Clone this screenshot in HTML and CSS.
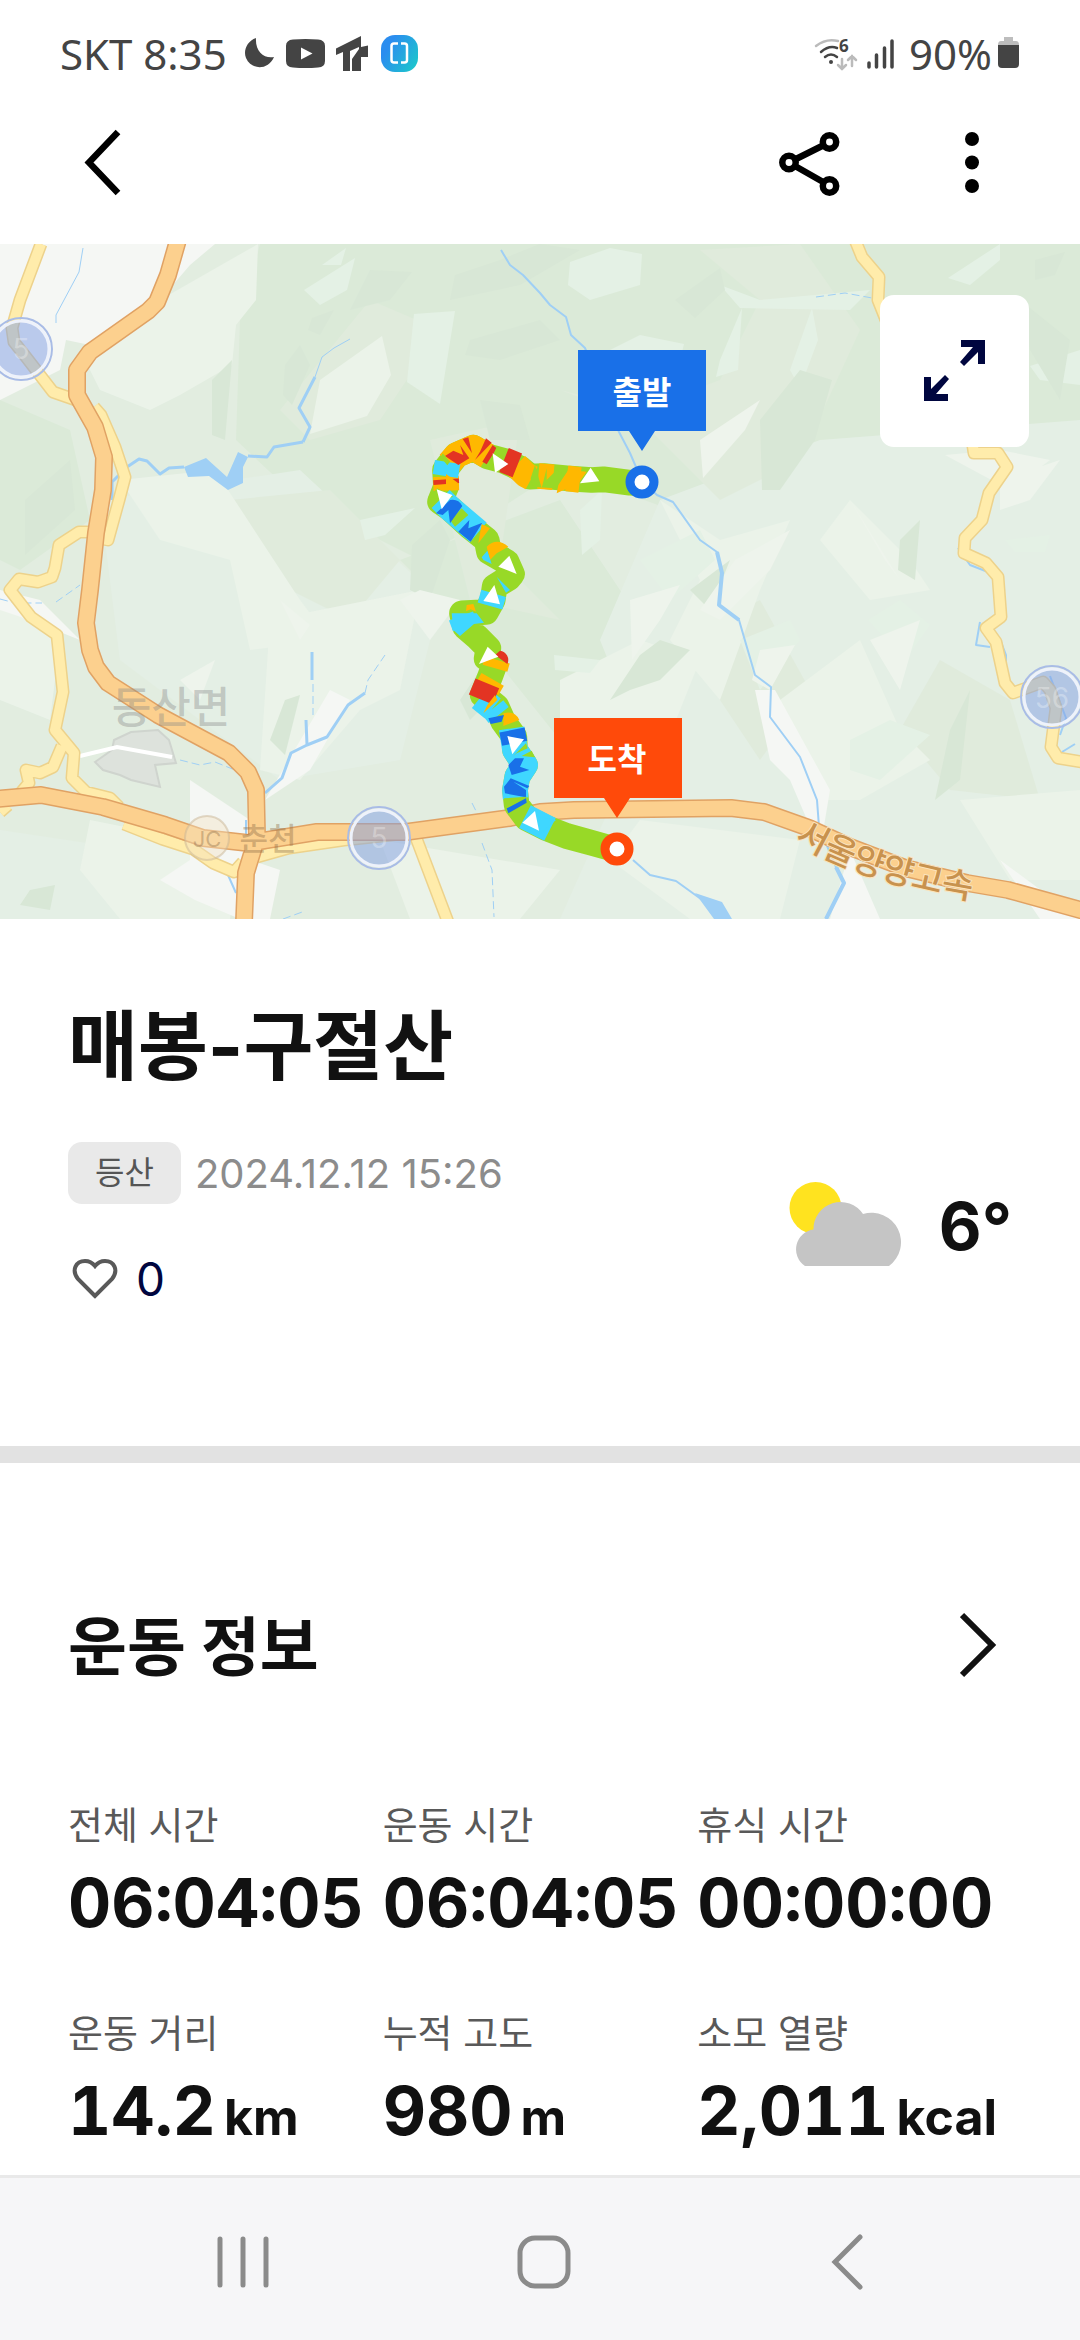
FILE: index.html
```html
<!DOCTYPE html>
<html lang="ko">
<head>
<meta charset="UTF-8" />
<meta name="viewport" content="width=device-width, initial-scale=1.0" />
<title>매봉-구절산</title>
<link rel="stylesheet" href="styles.css">
</head>
<body>

<div class="status-bar">
  <div class="status-left">
    <span>SKT 8:35</span>
    <svg class="status-icons" width="174" height="38" viewBox="243 34 174 38">
      <path d="M255 38C246 41 242 51 245 58C250 70 267 71 273 57C263 59 254 51 255 38Z" fill="#444"/>
      <path d="M292 39.500Q304.500 38.500 317 39.500Q324 40 324 46V61Q324 67 317 67.500Q304.500 68.500 292 67.500Q285 67 285 61V46Q285 40 292 39.500Z" fill="#444"/>
      <path d="M300 47.500L311.500 53.500L300 59.500Z" fill="#fff"/>
      <path d="M335 48.500L360 36V47L367 45.500V57H360V71H351V59L358 49V47L349 51V71H342V52L335 55Z" fill="#444"/>
      <defs>
        <linearGradient id="appGrad" x1="0" y1="0.200" x2="1" y2="0.800">
          <stop offset="0.200" stop-color="#2b8def"/>
          <stop offset="1" stop-color="#1cc6cc"/>
        </linearGradient>
      </defs>
      <rect x="380" y="35" width="37" height="37" rx="14" fill="url(#appGrad)"/>
      <path d="M397 43.500H393Q390.500 43.500 390.500 46V60Q390.500 62.500 393 62.500H397M400 43.500H403.500Q406 43.500 406 46V60Q406 62.500 403.500 62.500H400" fill="none" stroke="#fff" stroke-width="2.500"/>
    </svg>
  </div>
  <div class="status-right">
    <svg width="82" height="44" viewBox="810 30 82 44">
      <g fill="none" stroke="#444" stroke-width="2.500" stroke-linecap="round">
        <path d="M813 45Q823 37 835 40" stroke="#bbb"/>
        <path d="M818 51Q826 44 834 47M822 56Q828 51 834 56"/>
        <path d="M839 58V68M835 64L839 68L843 64M849 65V55M845 59L849 55L853 59" stroke="#bbb"/>
      </g>
      <circle cx="828" cy="61" r="2" fill="#444"/>
      <text x="836" y="51" class="wifi-gen">6</text>
      <path d="M866 62V66M873.500 54V66M881.500 47V66M889 40V66" stroke="#444" stroke-width="3.500" stroke-linecap="round"/>
    </svg>
    <span>90%</span>
    <svg width="22" height="32" viewBox="998 37 22 32">
      <path d="M1004 37H1013V41H1016Q1019 41 1019 45V50H998V45Q998 41 1001 41H1004Z" fill="#bdbdbd"/>
      <path d="M998 45H1019V64Q1019 68 1015 68H1002Q998 68 998 64Z" fill="#444"/>
    </svg>
  </div>
</div>

<header class="app-bar">
  <button class="icon-button" aria-label="뒤로">
    <svg width="60" height="80" viewBox="72 122 60 80"><path d="M118 132L89 162.500L118 193" fill="none" stroke="#000" stroke-width="6.500"/></svg>
  </button>
  <div class="app-bar-actions">
    <button class="icon-button" aria-label="공유">
      <svg width="80" height="80" viewBox="767 122 80 80">
        <g fill="none" stroke="#000" stroke-width="6.500">
          <path d="M794 159.500L823 145M794 166L823 182.500"/>
          <circle cx="788" cy="162.500" r="6.700"/>
          <circle cx="828.500" cy="142" r="6.700"/>
          <circle cx="828.500" cy="186" r="6.700"/>
        </g>
      </svg>
    </button>
    <button class="icon-button" aria-label="더보기">
      <svg width="80" height="80" viewBox="931 122 80 80"><circle cx="971" cy="139" r="7"/><circle cx="971" cy="162.500" r="7"/><circle cx="971" cy="186" r="7"/></svg>
    </button>
  </div>
</header>

<main>
  <section class="map">
    <svg class="map-canvas" viewBox="0 244 1080 675">
      <!-- terrain -->
      <rect y="244" width="1080" height="675" fill="#e2ede0"/>
      <path fill="#dbead8" d="M260 244H1080V420L940 480L820 470L700 520L560 470L420 560L300 500L236 440L240 320ZM400 560L560 500L640 620L560 740L480 640ZM0 400L70 430L90 520L20 570L0 560Z"/>
      <path fill="#e4efe5" d="M660 500L820 440L1080 420V919H560L640 740L600 640ZM100 500L300 470L440 600L400 760L280 780L120 660ZM0 830L200 860L160 919H0Z"/>
      <path fill="#e0ebdc" d="M370 300L440 330L380 420L310 440L280 410ZM560 390L640 410L720 380L760 300L700 250L800 244L860 330L800 460L720 500L640 420ZM430 440L520 420L500 560L560 620L470 600ZM230 500L330 490L400 560L350 620L250 570ZM680 640L760 600L810 690L760 760ZM940 660L1010 700L1040 800L950 790L900 730Z"/>
      <path fill="#ebf3e9" d="M160 300L258 244L256 300L236 325L232 365L180 395L150 410L100 390L85 360ZM320 380L382 336L391 375L367 416L310 434ZM120 480L215 470L300 600L330 640L250 650L230 560L160 540ZM660 500L720 540L790 520L760 590L720 700L670 640L700 580ZM850 500L910 560L930 590L870 600L820 540ZM270 620L420 590L400 690L360 710L300 780L260 770ZM560 680L640 640L700 660L660 760L560 730ZM780 700L860 640L900 730L930 760L860 800L820 800ZM640 820L800 840L780 919H690L610 860ZM380 840L560 870L520 919H410ZM90 820L240 850L230 919H120L80 870ZM960 800L1080 790V880L1010 880ZM0 590L60 640L50 720L0 700Z"/>
      <path fill="#e4f1e5" d="M570 262L610 248L642 254L640 285L590 300L568 285ZM414 314L455 311L440 404L407 382ZM304 290L355 258L347 290L320 305ZM322 265L346 248L341 265ZM720 360L742 308L738 370L716 377ZM790 370L812 308L818 340L800 388ZM640 335L684 344L680 360L600 355ZM580 510L602 490L600 540L582 555ZM360 520L415 508L385 535L365 540ZM948 278L1000 244L1000 260L970 285ZM1030 366L1080 350V385L1040 380ZM1005 540L1050 535L1045 552L1015 552ZM554 655L600 660L590 673L555 670ZM740 640L790 620L800 640L760 690ZM868 620L900 600L930 625L905 660ZM850 740L890 720L930 735L880 780L850 770ZM640 560L700 530L715 560L670 600ZM720 285L760 300L870 290L850 310L740 308Z"/>
      <path fill="#d8e7d6" d="M455 275L500 260L540 244L580 250L520 285L450 300ZM470 340L540 320L560 340L500 360L465 355ZM675 300L720 268L725 290L695 318ZM760 420L800 370L832 380L815 440L780 490L762 490ZM212 380L232 360L225 440L212 435ZM370 270L412 272L390 300L350 310ZM312 318L334 310L320 335L308 330ZM285 365L300 345L310 365L292 405L283 395ZM880 340L920 300L915 345L885 350ZM1035 260L1065 252L1055 275L1035 280ZM25 500L70 460L75 510L25 555ZM412 545L440 520L450 540L430 600L410 590ZM610 700L640 655L660 640L690 650L660 680L630 690ZM900 540L920 520L915 580L898 570ZM935 800L950 730L970 690L960 780ZM270 740L285 700L300 695L285 755ZM480 670L500 690L470 720L460 700ZM1020 300L1070 340L1060 400L1030 350ZM30 890L55 885L50 910L20 905ZM690 590L730 560L710 610ZM480 400L520 405L530 440L490 440Z"/>
      <path fill="#eef4ec" d="M735 560L790 530L770 570L720 620L700 610ZM870 640L920 620L900 690ZM1000 480L1060 460L1030 500L1000 510ZM460 600L430 640L400 600L420 590ZM280 600L310 625L300 640ZM180 680L215 660L200 700ZM630 600L680 585L660 620L632 660ZM945 455L1000 450L1050 460L1010 490ZM760 650L795 645L770 690L752 680ZM850 500L900 580L885 560ZM30 600L60 625L55 640L10 610ZM700 440L760 400L745 430L703 478Z"/>
      <path fill="#f5f7f4" d="M0 244H215L190 265L160 300L90 345L66 340L60 370L0 400ZM190 780L250 820L240 919L195 900L160 880L190 860ZM0 590L40 600L80 640L30 620L0 610ZM755 690L775 690L830 790L820 850L790 780L770 760ZM850 850L880 919H830ZM265 800L330 690L350 700L310 770ZM250 860L280 870L270 919H250ZM1000 860L1080 919H1040Z"/>

      <!-- town -->
      <path d="M95 762L112 750L114 740L131 732L158 730L169 740L176 763L155 765L160 787L131 780L120 775L103 770Z" fill="#dde2dc" stroke="#cfd4ce" stroke-width="2"/>
      <path d="M80 756L117 747L172 757" fill="none" stroke="#fff" stroke-width="4"/>

      <!-- water -->
      <g fill="none" stroke="#9fcff5" stroke-width="2" stroke-linejoin="round">
        <path d="M112 500V482L127 467L139 459L147 461L160 474L169 468L184 467M248 456L267 457L274 447L303 442" stroke-width="3"/>
        <path d="M303 442L310 427L299 408L315 377" stroke-width="3"/>
        <path d="M315 377L322 357L334 348L350 339" stroke-width="1"/>
        <path d="M83 248L79 272L56 315V323" stroke-width="1"/>
        <path d="M501 250L510 265L523 275L540 293L550 305L566 317L571 335L585 348L619 432L630 453L642 481L657 495L673 502L700 540L717 552L722 573L719 605L739 620L755 675L771 687L770 717L800 757L817 800L819 827L836 867L844 883L826 919"/>
        <path d="M717 552L722 573L719 605L739 620M836 867L844 883L826 919" stroke-width="4"/>
        <path d="M633 860L650 875L676 881L712 907"/>
        <path d="M265 793L282 778L291 753L307 745L327 737L348 705L365 693M307 745L306 720M312 652V680" stroke-width="3"/>
        <path d="M365 693L368 680L385 655M313 684L313 715M180 760L200 765L215 762L235 770M816 297L845 293L872 298M472 803L478 815M482 843L492 870L494 917M283 919L305 911M0 599L15 603H42M56 602L80 585" stroke-width="1" stroke-dasharray="8 4"/>
        <path d="M958 548L970 565L988 572M980 622L976 645L990 647M1001 642L1006 655V668M1050 676L1066 718L1060 735M1062 752L1075 744M246 820V840M228 875L236 893M150 832L185 850"/>
      </g>
      <path d="M184 467L206 458L227 477L238 452L248 457L243 467V483L228 490L209 476L188 477ZM695 893L722 902L732 919H714Z" fill="#9fcff5"/>

      <!-- local roads -->
      <g class="road-local">
        <path id="local" d="M41 244L20 300L12 328L14 342L26 357L53 392L76 400M94 407L101 415L115 447L125 477L119 500L108 540L98 538M90 532H79L59 545L55 568L52 577L38 582L19 579L10 590L31 617L57 635L63 692L55 730L74 753L72 778L86 792L110 798L119 807M62 746L53 767L40 773L26 770L29 783L19 795M0 812L8 805M124 824L162 839L193 849L213 863L234 872L243 862M257 857L289 848L344 840L400 834M415 835L448 922M855 240L862 257L879 277L878 300L890 330M972 440L974 453H998L1007 467L989 493L982 520L965 538L964 553L986 563L998 577L1001 617L986 628L996 642L1005 683L1013 693L1043 682L1050 690L1056 708L1051 747L1058 758L1082 762"/>
        <use href="#local" class="fill"/>
      </g>

      <!-- expressways -->
      <g class="road-main">
        <path id="main-roads" d="M178 240L168 275L157 302L148 311L90 352L77 370V395L95 427L104 457L103 490L96 533L90 590L86 623L90 650L96 667L108 683L158 715L229 753L248 772L256 790L257 837L246 873L244 922M-4 799L41 795L103 807L165 825L203 838L248 843L317 832H406L510 818L540 812L574 810L731 808L764 812L809 828L850 847L905 868L967 883L1008 890L1084 911"/>
        <use href="#main-roads" class="fill"/>
      </g>

      <!-- route shields -->
      <g class="shield">
        <circle cx="21" cy="349" r="31"/><circle cx="21" cy="349" r="28" class="inner"/>
        <circle cx="379" cy="838" r="31"/><circle cx="379" cy="838" r="28" class="inner"/>
        <circle cx="1052" cy="697" r="31"/><circle cx="1052" cy="697" r="28" class="inner"/>
        <text x="21" y="359">5</text>
        <text x="379" y="848">5</text>
        <text x="1052" y="708">56</text>
      </g>

      <!-- place names -->
      <circle cx="207" cy="838" r="22" fill="#f3e0c0" fill-opacity="0.400" stroke="#c9b596" stroke-opacity="0.500" stroke-width="2"/>
      <text x="207" y="847" class="place jc">JC</text>
      <text x="171" y="723" class="place town">동산면</text>
      <text x="268" y="850" class="place exit">춘천</text>
      <path id="highway-line" d="M794 841Q870 886 990 902" fill="none"/>
      <text class="highway"><textPath href="#highway-line">서울양양고속</textPath></text>

      <!-- trail, coloured by speed -->
      <svg x="400" y="400" width="280" height="480" viewBox="0 0 840 1440">
        <g fill="none" stroke-width="77" stroke-linejoin="round" stroke="#98d927">
          <path stroke-linecap="round" d="M726 250L690 248L610 238L575 240L500 235L430 228L390 230L360 205L310 182L265 170L220 143L170 165L135 210L138 260L120 305L150 325L210 380L260 420L267 455L320 486L336 522L326 534L284 560L278 600L258 636L186 640L195 680L230 710L265 745L260 775L285 790L270 830L248 885L290 920L310 965L343 1010L345 1050L375 1095L352 1130L345 1170L350 1215L380 1255L440 1285L500 1308L570 1327L652 1350"/>
          <path stroke="#ffb800" d="M540 240L500 235M460 232L415 228M395 234L378 225L348 195M262 168L220 143L170 165L148 190M138 230L139 272"/>
          <path stroke="#e33423" d="M352 196L312 180M138 238L139 252"/>
          <path stroke="#3fd7ff" d="M143 186L136 228M122 297L150 325L235 397"/>
          <path stroke="#3fd7ff" d="M281 580L270 618M183 648L195 680M240 894L278 925M280 925L296 945M335 985L345 1050L375 1095L352 1130L345 1170L347 1195M375 1250L450 1288"/>
          <path stroke="#ffb800" d="M292 780L285 805M278 838L262 866"/>
          <path stroke="#e33423" d="M262 850L242 898"/>
          <path stroke="#1970e8" d="M336 990L344 1030"/>
        </g>
        <path fill="#e33423" d="M160 152L190 165L180 135L208 175L175 195L135 168ZM188 117L205 112L216 160ZM258 115L275 128L225 180L240 155ZM278 135L290 145L260 193L247 185ZM300 752A28 28 0 0 1 322 792L285 765Z"/>
        <path fill="#98d927" d="M392 235L405 195L425 265L440 205L440 240L470 210L510 235L460 265L400 260ZM128 160L150 185L142 196L122 172ZM290 140L312 150L290 190L270 190ZM112 265L160 290L130 300L85 290ZM185 325L205 345L165 380L150 360Z"/>
        <path fill="#ffb800" d="M138 222L175 250L138 262ZM505 210L560 215L535 250L470 280L475 255ZM245 372L270 385L235 430ZM260 440Q290 410 325 440L290 460L270 480ZM200 615L220 612L228 635L212 628L198 634ZM285 885L292 900L250 940L262 915ZM310 940Q345 930 358 960L310 978Z"/>
        <path fill="#1970e8" d="M150 300Q175 295 187 318L150 370L145 330L128 345L108 340ZM247 368L212 425L175 395L208 360L205 385ZM265 955L312 945L305 965L272 972ZM345 1075L372 1075L360 1100L388 1110L335 1125L325 1095ZM332 1135L388 1158L382 1165L340 1145L378 1170L378 1192L315 1180L312 1160ZM320 1225L378 1195L380 1208L325 1240Z"/>
        <path fill="#98d927" d="M312 1195L380 1190L320 1225ZM340 1068L378 1030L383 1045L350 1060ZM365 1068L395 1052L405 1072Z"/>
        <path fill="#3fd7ff" d="M245 472L262 452L275 492L250 480ZM290 530L330 570L318 578ZM155 640L230 640L252 668L222 672L180 708L160 690ZM415 1250L468 1260L415 1306L370 1280Z"/>
        <path fill="#fff" d="M572 203L540 250L598 244ZM278 160L285 218L325 192ZM110 268L157 285L125 328ZM328 467L295 500L350 522ZM283 555L250 603L300 613ZM263 740L237 792L295 770ZM322 1008L372 1018L337 1063ZM405 1233L367 1268L417 1292Z"/>
      </svg>

      <!-- start / finish -->
      <path d="M578 350H706V431H655L642 451L629 431H578Z" fill="#1970e8"/>
      <circle cx="642" cy="482" r="12" fill="#fff" stroke="#1970e8" stroke-width="9"/>
      <text x="642" y="404" class="pin">출발</text>
      <path d="M554 718H682V798H630L617 818L604 798H554Z" fill="#ff4a0a"/>
      <circle cx="617" cy="849" r="12" fill="#fff" stroke="#ff4a0a" stroke-width="9"/>
      <text x="617" y="771" class="pin">도착</text>
    </svg>
    <button class="expand" aria-label="지도 확대">
      <svg width="62" height="62" viewBox="0 0 62 62" fill="#00063f">
        <path d="M37 0H61V24H54V12L40 26L36 22L49 7H37Z"/>
        <path d="M24 61H0V37H7V49L21 35L25 39L12 54H24Z"/>
      </svg>
    </button>
  </section>

  <section class="summary">
    <h1>매봉-구절산</h1>
    <div class="summary-row">
      <div>
        <div class="meta">
          <span class="tag">등산</span>
          <time datetime="2024-12-12T15:26">2024.12.12 15:26</time>
        </div>
        <button class="like" aria-label="좋아요 0">
          <svg width="46" height="42" viewBox="0 0 46 42"><path d="M23 38L6 21C-1 12 4 3 13 3Q19 3 23 8Q27 3 33 3C42 3 47 12 40 21Z" fill="none" stroke="#595959" stroke-width="4"/></svg>
          <span>0</span>
        </button>
      </div>
      <div class="weather">
        <svg width="112" height="88" viewBox="788 1182 112 88">
          <circle cx="814.500" cy="1208" r="26" fill="#ffe31f"/>
          <path d="M804 1266A20 20 0 0 1 812.500 1229.500A27 27 0 0 1 862 1214A29.500 29.500 0 0 1 888 1266Z" fill="#c5c5c5"/>
        </svg>
        <span>6°</span>
      </div>
    </div>
  </section>

  <section class="workout">
    <div class="workout-head">
      <h2>운동 정보</h2>
      <button class="icon-button" aria-label="운동 정보 더보기">
        <svg width="52" height="70" viewBox="0 0 52 70"><path d="M2 3L32 33L2 63" fill="none" stroke="#111" stroke-width="6"/></svg>
      </button>
    </div>
    <dl class="stats">
      <div><dt>전체 시간</dt><dd>06:04:05</dd></div>
      <div><dt>운동 시간</dt><dd>06:04:05</dd></div>
      <div><dt>휴식 시간</dt><dd>00:00:00</dd></div>
      <div><dt>운동 거리</dt><dd>14.2<small>km</small></dd></div>
      <div><dt>누적 고도</dt><dd>980<small>m</small></dd></div>
      <div><dt>소모 열량</dt><dd>2,011<small>kcal</small></dd></div>
    </dl>
  </section>
</main>

<nav class="system-nav">
  <button aria-label="최근 앱">
    <svg width="56" height="60" viewBox="0 0 56 60"><path d="M5 7V53M28 7V53M51 7V53"/></svg>
  </button>
  <button aria-label="홈">
    <svg width="56" height="60" viewBox="0 0 56 60"><rect x="4" y="6" width="48" height="48" rx="15"/></svg>
  </button>
  <button aria-label="이전">
    <svg width="56" height="60" viewBox="0 0 56 60"><path d="M43 5L18 30L43 55"/></svg>
  </button>
</nav>

</body>
</html>
```

FILE: styles.css
```css
* {
  box-sizing: border-box;
}
body {
  display: flex;
  flex-direction: column;
  min-height: 100vh;
  margin: 0;
  background-color: #fff;
  color: #111;
  font-family: Inter, "Noto Sans CJK KR", sans-serif;
}
main {
  flex: 1;
}
svg {
  display: block;
}
button {
  margin: 0;
  padding: 0;
  border: none;
  background: none;
  color: inherit;
  font-family: inherit;
  cursor: pointer;
}

.status-bar {
  display: flex;
  justify-content: space-between;
  align-items: center;
  padding: 26px 60px 0;
  height: 80px;
  color: #444;
  font-family: "Noto Sans", sans-serif;
  font-size: 42px;
}
.status-left {
  display: flex;
  align-items: center;
  gap: 17px;
}
.status-right {
  display: flex;
  align-items: center;
  gap: 14px;
}
.status-right span {
  margin-right: -8px;
}
.wifi-gen {
  fill: #444;
  font-size: 17px;
  font-weight: bold;
}

.app-bar {
  display: flex;
  justify-content: space-between;
  align-items: center;
  padding: 0 68px 0 72px;
  height: 164px;
}
.app-bar-actions {
  display: flex;
  gap: 84px;
}

.map {
  position: relative;
}
.map-canvas {
  width: 100%;
  height: auto;
}
.expand {
  position: absolute;
  top: 51px;
  right: 51px;
  display: flex;
  justify-content: center;
  align-items: center;
  width: 149px;
  height: 152px;
  border-radius: 14px;
  background-color: #fff;
}
.road-local {
  fill: none;
  stroke: #edd28b;
  stroke-width: 13px;
  stroke-linejoin: round;
}
.road-local .fill {
  stroke: #ffecab;
  stroke-width: 10px;
}
.road-main {
  fill: none;
  stroke: #e0a264;
  stroke-width: 18px;
  stroke-linejoin: round;
}
.road-main .fill {
  stroke: #fcd08e;
  stroke-width: 15px;
}
.shield circle {
  fill: none;
  stroke: #a9bce6;
  stroke-width: 2px;
}
.shield .inner {
  fill: #7f9ee3;
  fill-opacity: 0.5;
  stroke: #eef2fb;
  stroke-width: 3px;
}
.shield text {
  fill: #fff;
  fill-opacity: 0.3;
  font-size: 28px;
  text-anchor: middle;
}
.place {
  fill-opacity: 0.4;
  text-anchor: middle;
}
.town {
  fill: #888;
  font-size: 43px;
  font-weight: 500;
}
.exit {
  fill: #8a6a45;
  font-size: 31px;
  font-weight: 500;
}
.jc {
  fill: #8a6a45;
  font-size: 22px;
}
.highway {
  fill: #c8924e;
  stroke: #fbe3bd;
  stroke-width: 2px;
  paint-order: stroke;
  font-size: 34px;
  font-weight: 500;
}
.pin {
  fill: #fff;
  font-size: 32px;
  font-weight: bold;
  text-anchor: middle;
}

.summary {
  padding: 77px 68px 137px;
  border-bottom: 17px solid #e2e2e2;
}
h1 {
  margin: 0 0 46px;
  font-size: 76px;
  line-height: 100px;
  font-weight: bold;
}
.summary-row {
  display: flex;
  justify-content: space-between;
  align-items: center;
}
.meta {
  display: flex;
  align-items: center;
  gap: 14px;
  color: #8c8c8c;
  font-size: 40px;
}
.tag {
  padding: 0 27px;
  border-radius: 14px;
  background-color: #e9e9e9;
  color: #555;
  font-size: 32px;
  line-height: 62px;
}
.like {
  display: flex;
  align-items: center;
  gap: 18px;
  margin-top: 45px;
  padding-left: 4px;
  color: #00063f;
  font-size: 46px;
  line-height: 60px;
}
.weather {
  display: flex;
  align-items: center;
  gap: 38px;
  font-size: 66px;
  line-height: 80px;
  font-weight: bold;
}

.workout {
  padding: 144px 68px 24px;
}
.workout-head {
  display: flex;
  justify-content: space-between;
  align-items: center;
}
h2 {
  margin: 0;
  font-size: 64px;
  line-height: 80px;
  font-weight: bold;
}
.stats {
  display: grid;
  grid-template-columns: repeat(3, 1fr);
  row-gap: 69px;
  margin: 113px 0 0;
}
.stats dt {
  margin-bottom: 17px;
  color: #595959;
  font-size: 38px;
  line-height: 50px;
}
.stats dd {
  margin: 0;
  font-size: 67px;
  line-height: 72px;
  font-weight: bold;
  font-variant-numeric: tabular-nums;
  white-space: nowrap;
}
.stats small {
  margin-left: 8px;
  font-size: 50px;
  line-height: 50px;
}

.system-nav {
  display: grid;
  grid-template-columns: repeat(3, 1fr);
  padding: 6px 84px 0 92px;
  height: 165px;
  border-top: 3px solid #e9e9e9;
  background-color: #f6f6f8;
}
.system-nav button {
  display: flex;
  justify-content: center;
  align-items: center;
}
.system-nav svg {
  fill: none;
  stroke: #8b8b8b;
  stroke-width: 5px;
  stroke-linecap: round;
}
```
